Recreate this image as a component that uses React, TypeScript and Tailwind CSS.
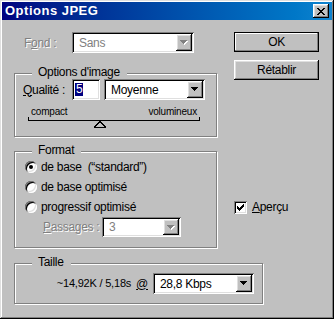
import type { ReactNode } from 'react'

const raised = 'shadow-[inset_-1px_-1px_#000,inset_1px_1px_#fff,inset_-2px_-2px_#808080,inset_2px_2px_#dfdfdf]'
const sunken = 'shadow-[inset_1px_1px_#808080,inset_-1px_-1px_#fff,inset_2px_2px_#000,inset_-2px_-2px_#dfdfdf]'
const disabledText = 'text-[#808080] [text-shadow:1px_1px_0_#fff]'

function Arrow({ disabled }: { disabled?: boolean }) {
  const rows = [7, 5, 3, 1]
  return (
    <svg width="8" height="5" viewBox="0 0 8 5" shapeRendering="crispEdges">
      {disabled &&
        rows.map((w, i) => <rect key={'s' + i} x={i + 1} y={i + 1} width={w} height={1} fill="#fff" />)}
      {rows.map((w, i) => (
        <rect key={i} x={i} y={i} width={w} height={1} fill={disabled ? '#808080' : '#000'} />
      ))}
    </svg>
  )
}

function Select({ value, disabled, className }: { value: string; disabled?: boolean; className: string }) {
  return (
    <div className={`flex bg-white p-[2px] ${sunken} ${className}`}>
      <div className={`flex flex-1 items-center pl-[5px] ${disabled ? 'text-[#808080]' : 'text-black'}`}>{value}</div>
      <div className={`flex w-[16px] items-center justify-center bg-[#c0c0c0] ${raised}`}>
        <Arrow disabled={disabled} />
      </div>
    </div>
  )
}

function Group({ title, className, children }: { title: string; className: string; children?: ReactNode }) {
  return (
    <div className={`relative border border-[#808080] shadow-[inset_1px_1px_#fff,1px_1px_#fff] ${className}`}>
      <span className="absolute -top-[9px] left-[17px] bg-[#c0c0c0] pl-[6px] pr-[7px] leading-[14px]">{title}</span>
      {children}
    </div>
  )
}

function Radio({ checked, label }: { checked?: boolean; label: string }) {
  return (
    <div className="flex h-[20px] items-center gap-[4px]">
      <div className="flex h-[12px] w-[12px] items-center justify-center rounded-full bg-white shadow-[inset_1px_1px_0_#808080,inset_-1px_-1px_0_#fff,inset_2px_2px_0_#000,inset_-2px_-2px_0_#dfdfdf]">
        {checked && <div className="h-[4px] w-[4px] rounded-full bg-black" />}
      </div>
      <span className="whitespace-pre">{label}</span>
    </div>
  )
}

function CloseGlyph() {
  const px = [
    'XX....XX',
    '.XX..XX.',
    '..XXXX..',
    '...XX...',
    '..XXXX..',
    '.XX..XX.',
    'XX....XX',
  ]
  return (
    <svg width="8" height="7" viewBox="0 0 8 7" shapeRendering="crispEdges">
      {px.flatMap((row, y) =>
        row.split('').map((c, x) => (c === 'X' ? <rect key={`${x}-${y}`} x={x} y={y} width={1} height={1} fill="#000" /> : null)),
      )}
    </svg>
  )
}

export default function App() {
  return (
    <div
      className={`h-[319px] w-[334px] bg-[#c0c0c0] p-[2px] font-['Liberation_Sans',Arial,sans-serif] text-[12px] tracking-[-0.3px] text-black shadow-[inset_-1px_-1px_#000,inset_1px_1px_#dfdfdf,inset_-2px_-2px_#808080,inset_2px_2px_#fff]`}
    >
      <div className="flex h-[18px] items-center justify-between bg-linear-to-r from-[#000080] to-[#1084d0] pl-[3px] pr-[3px]">
        <span className="text-[13px] font-bold tracking-[0.5px] text-white">Options JPEG</span>
        <div className={`flex h-[14px] w-[16px] items-center justify-center bg-[#c0c0c0] ${raised}`}>
          <CloseGlyph />
        </div>
      </div>

      <div className="flex pl-[12px] pt-[12px]">
        <div className="flex w-[203px] flex-col">
          <div className="flex h-[21px] items-center">
            <span className={`w-[58px] pl-[10px] ${disabledText}`}>
              F<u>o</u>nd :
            </span>
            <Select value="Sans" disabled className="h-[21px] w-[122px]" />
          </div>

          <Group title="Options d'image" className="mt-[20px] h-[64px] pl-[8px] pt-[5px]">
            <div className="flex h-[21px] items-center">
              <span className="w-[49px]">
                <u>Q</u>ualité :
              </span>
              <div className={`flex h-[21px] w-[28px] items-center bg-white pl-[3px] ${sunken}`}>
                <span className="bg-[#000080] px-[1px] leading-[13px] text-white">5</span>
              </div>
              <Select value="Moyenne" className="ml-[4px] h-[21px] w-[101px]" />
            </div>
            <div className="ml-[5px] mt-[6px] w-[172px]">
              <div className="flex h-[11px] items-end justify-between px-[3px] text-[10px] leading-[11px] tracking-[-0.2px]">
                <span>compact</span>
                <span>volumineux</span>
              </div>
              <div className="h-[4px] border-x border-b border-black" />
              <svg className="ml-[66px]" width="12" height="7" viewBox="0 0 12 7" shapeRendering="crispEdges">
                <polygon points="6,0.5 11.5,6 0.5,6" fill="#c0c0c0" stroke="#000" strokeWidth="1" />
              </svg>
            </div>
          </Group>

          <Group title="Format" className="mt-[14px] h-[97px] pl-[10px] pt-[5px]">
            <Radio checked label="de base  (“standard”)" />
            <Radio label="de base optimisé" />
            <Radio label="progressif optimisé" />
            <div className="ml-[18px] flex h-[20px] items-center">
              <span className={`w-[59px] ${disabledText}`}>
                <u>P</u>assages :
              </span>
              <Select value="3" disabled className="h-[20px] w-[79px]" />
            </div>
          </Group>
        </div>

        <div className="ml-[17px] flex w-[85px] flex-col">
          <div className="flex h-[20px] items-center justify-center border border-black shadow-[inset_-1px_-1px_#808080,inset_1px_1px_#fff]">
            OK
          </div>
          <div className={`mt-[8px] flex h-[20px] items-center justify-center ${raised}`}>Rétablir</div>
          <div className="mt-[118px] flex items-center gap-[5px]">
            <div className={`flex h-[13px] w-[13px] items-center justify-center bg-white ${sunken}`}>
              <svg width="7" height="7" viewBox="0 0 7 7" shapeRendering="crispEdges">
                <path d="M0 2h1v3H0zM1 3h1v3H1zM2 4h1v3H2zM3 3h1v3H3zM4 2h1v3H4zM5 1h1v3H5zM6 0h1v3H6z" fill="#000" />
              </svg>
            </div>
            <span>
              <u>A</u>perçu
            </span>
          </div>
        </div>
      </div>

      <Group title="Taille" className="ml-[12px] mt-[15px] h-[41px] w-[249px] pr-[8px] pt-[9px]">
        <div className="flex h-[21px] items-center justify-end">
          <span className="text-[11px] tracking-[-0.2px]">~14,92K / 5,18s</span>
          <u className="ml-[5px]">@</u>
          <Select value="28,8 Kbps" className="ml-[5px] h-[21px] w-[101px]" />
        </div>
      </Group>
    </div>
  )
}
